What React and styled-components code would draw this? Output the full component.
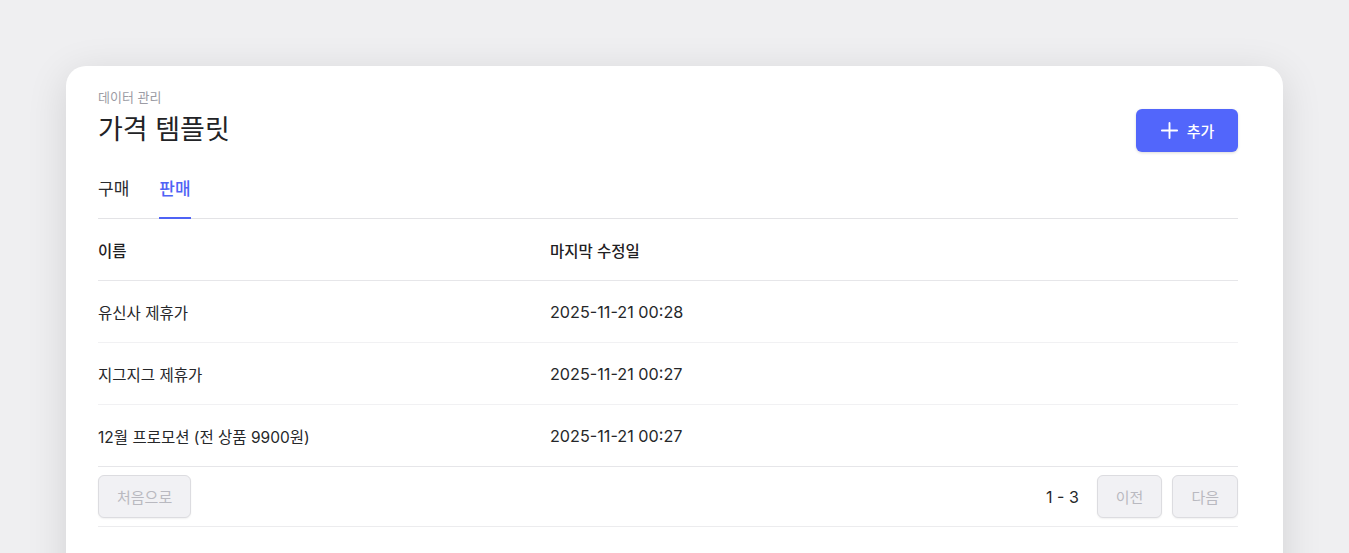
import styled, { createGlobalStyle } from 'styled-components'

const GlobalStyle = createGlobalStyle`
  html, body {
    margin: 0;
    padding: 0;
    background: #efeff1;
    font-family: Inter, "Noto Sans CJK KR", sans-serif;
    color: #222326;
  }
`

const Page = styled.div`
  height: 553px;
  overflow: hidden;
  padding: 66px 66px 0 66px;
  box-sizing: border-box;
`

const Card = styled.div`
  background: #fff;
  border-radius: 20px;
  box-shadow: 0 8px 40px rgba(0, 0, 0, 0.12);
  padding: 22px 45px 40px 32px;
  min-height: 560px;
  box-sizing: border-box;
`

const Header = styled.div`
  display: flex;
  align-items: flex-start;
  justify-content: space-between;
`

const Crumb = styled.div`
  font-size: 13px;
  color: #9c9ca4;
  line-height: 18px;
`

const Title = styled.h1`
  margin: 7px 0 0;
  font-size: 27px;
  font-weight: 400;
  line-height: 34px;
  color: #222326;
`

const AddButton = styled.button`
  display: flex;
  align-items: center;
  justify-content: center;
  gap: 8px;
  width: 102px;
  height: 43px;
  margin-top: 21px;
  border: none;
  border-radius: 6px;
  background: #5266fb;
  color: #fff;
  font-family: inherit;
  font-size: 15px;
  font-weight: 500;
  box-shadow: 0 1px 3px rgba(0, 0, 0, 0.15);
  cursor: pointer;
`

const Tabs = styled.div`
  display: flex;
  gap: 30px;
  margin-top: 20px;
  border-bottom: 1px solid #e3e3e6;
`

const Tab = styled.div`
  padding: 6px 0 19px;
  font-size: 17px;
  line-height: 22px;
  font-weight: ${p => (p.$active ? 500 : 400)};
  color: ${p => (p.$active ? '#4f63f5' : '#2a2b2e')};
  box-shadow: ${p => (p.$active ? 'inset 0 -2px 0 #4f63f5' : 'none')};
  margin-bottom: -1px;
`

const Row = styled.div`
  display: grid;
  grid-template-columns: 452px 1fr;
  align-items: center;
  height: 62px;
  box-sizing: border-box;
  border-bottom: 1px solid ${p => (p.$strong ? '#e6e6e9' : '#f1f1f3')};
  font-size: 15.5px;
  font-weight: ${p => (p.$head ? 500 : 400)};
  color: ${p => (p.$head ? '#1f2023' : '#26272a')};
`

const DateCell = styled.span`
  font-size: 16.2px;
`

const Footer = styled.div`
  display: flex;
  align-items: center;
  gap: 10px;
  height: 60px;
  box-sizing: border-box;
  border-bottom: 1px solid #ececee;
`

const Count = styled.span`
  margin-left: auto;
  margin-right: 8px;
  font-size: 16px;
  color: #26272a;
`

const PageButton = styled.button`
  height: 43px;
  padding: 0 18px;
  border: 1px solid #dcdce0;
  border-radius: 6px;
  background: #f1f1f4;
  color: #b9b9c0;
  font-family: inherit;
  font-size: 15px;
  box-shadow: 0 1px 2px rgba(0, 0, 0, 0.06);
`

const PlusIcon = () => (
  <svg width="19" height="19" viewBox="0 0 20 20" fill="none" stroke="#fff" strokeWidth="2" strokeLinecap="round">
    <path d="M10 2v16M2 10h16" />
  </svg>
)

const rows = [
  { name: '유신사 제휴가', date: '2025-11-21 00:28' },
  { name: '지그지그 제휴가', date: '2025-11-21 00:27' },
  { name: '12월 프로모션 (전 상품 9900원)', date: '2025-11-21 00:27' },
]

export default function App() {
  return (
    <>
      <GlobalStyle />
      <Page>
        <Card>
          <Header>
            <div>
              <Crumb>데이터 관리</Crumb>
              <Title>가격 템플릿</Title>
            </div>
            <AddButton>
              <PlusIcon />
              추가
            </AddButton>
          </Header>
          <Tabs>
            <Tab>구매</Tab>
            <Tab $active>판매</Tab>
          </Tabs>
          <Row $head $strong>
            <span>이름</span>
            <span>마지막 수정일</span>
          </Row>
          {rows.map((r, i) => (
            <Row key={r.name} $strong={i === rows.length - 1}>
              <span>{r.name}</span>
              <DateCell>{r.date}</DateCell>
            </Row>
          ))}
          <Footer>
            <PageButton>처음으로</PageButton>
            <Count>1 - 3</Count>
            <PageButton>이전</PageButton>
            <PageButton>다음</PageButton>
          </Footer>
        </Card>
      </Page>
    </>
  )
}
